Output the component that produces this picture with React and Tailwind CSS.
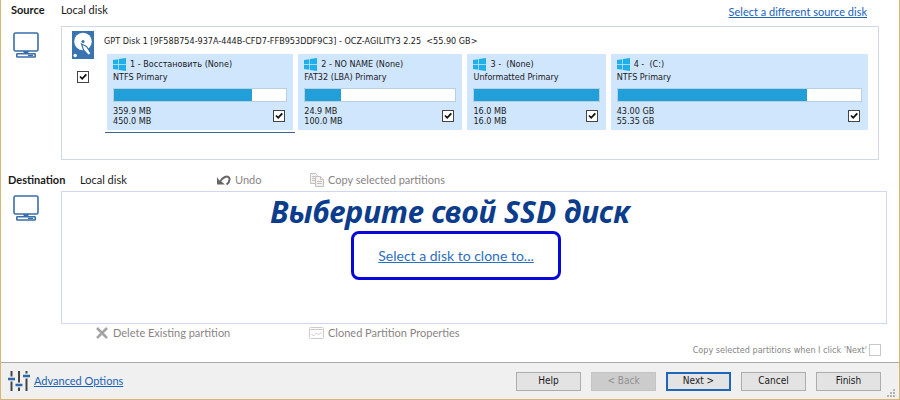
import React, { useState } from 'react';

const partitions = [
  { id: 1, title: '1 - Восстановить (None)', type: 'NTFS Primary', used: '359.9 MB', total: '450.0 MB', percent: 80, selected: true },
  { id: 2, title: '2 - NO NAME (None)', type: 'FAT32 (LBA) Primary', used: '24.9 MB', total: '100.0 MB', percent: 24 },
  { id: 3, title: '3 -  (None)', type: 'Unformatted Primary', used: '16.0 MB', total: '16.0 MB', percent: 100 },
  { id: 4, title: '4 -  (C:)', type: 'NTFS Primary', used: '43.00 GB', total: '55.35 GB', percent: 78 },
];

function ComputerIcon() {
  return (
    <svg width="26" height="26" viewBox="0 0 26 26" fill="none" stroke="#3a6ea8" strokeWidth="1.6">
      <rect x="1" y="1" width="24" height="18" rx="1.5" />
      <path d="M10 19h6l-1 2.500h-4z" fill="#3a6ea8" stroke="none" />
      <rect x="3.8" y="21.8" width="18.4" height="3.2" rx="0.6" />
      <path d="M15 23.400h5" strokeWidth="1.4" />
    </svg>
  );
}

function DiskIcon() {
  return (
    <svg width="22" height="28" viewBox="0 0 22 28">
      <rect width="22" height="28" fill="#3a74b0" />
      <circle cx="11" cy="10.5" r="8.8" fill="#fff" />
      <circle cx="11" cy="10.5" r="1.6" fill="#3a74b0" />
      <path d="M9.500 13l5 2.500 4.500 7-2.500 2-5-5.500z" fill="#fff" stroke="#3a74b0" strokeWidth="1.2" />
      <circle cx="3.2" cy="24.5" r="1.7" fill="#fff" />
    </svg>
  );
}

function WindowsIcon() {
  return (
    <svg width="13" height="13" viewBox="0 0 13 13" fill="#1fb0ea" className="shrink-0">
      <path d="M0 2L5.300 1.200v4.900H0zM6 1L13 0v6.100H6zM0 6.800h5.300v5L0 11zM6 6.800h7V13l-7-1z" />
    </svg>
  );
}

function UndoIcon() {
  return (
    <svg width="15" height="12" viewBox="0 0 15 12" fill="none">
      <path d="M4 8C6 3 12 .8 13.3 4.200 14 6.500 12.500 9 10.500 10.500" stroke="#666" strokeWidth="2" />
      <path d="M1 3v7.500h8L6.500 8.500 3 6z" fill="#666" />
    </svg>
  );
}

function CopyIcon() {
  return (
    <svg width="15" height="14" viewBox="0 0 15 14" fill="#f5f2f2" stroke="#c4bebe">
      <path d="M1.500.5h5l2 2v8h-7z" />
      <path d="M3 3.500h3M3 5.500h3M3 7.500h3" />
      <path d="M6.500 3.500h5l3 3v7h-8z" />
      <path d="M11.500 3.500v3h3M8 8.500h5M8 10.500h5" />
    </svg>
  );
}

function PropertiesIcon() {
  return (
    <svg width="15" height="12" viewBox="0 0 15 12" fill="none" stroke="#d2caca">
      <rect x=".5" y=".5" width="14" height="11" rx="1" />
      <path d="M.5 2.500h14" />
      <path d="M2.500 7l2 2 3-3 2 2 3-3" />
    </svg>
  );
}

function SlidersIcon() {
  return (
    <svg width="22" height="20" viewBox="0 0 22 20" fill="none">
      <path d="M3.500 0v20M11 0v20M18.500 0v20" stroke="#444" strokeWidth="2" />
      <path d="M0 8h7M7.500 14h7M15 5h7" stroke="#efefef" strokeWidth="5" />
      <path d="M0 8h7M7.500 14h7M15 5h7" stroke="#2f67ad" strokeWidth="2.400" />
    </svg>
  );
}

function Checkbox(props) {
  return (
    <span className="relative flex size-3 shrink-0">
      <input
        type="checkbox"
        className="peer size-3 appearance-none border border-[#444] bg-white disabled:border-[#c8c8c8]"
        {...props}
      />
      <svg viewBox="0 0 12 12" className="pointer-events-none absolute inset-0 hidden size-3 peer-checked:block" fill="none" stroke="#111" strokeWidth="1.8">
        <path d="M3 5.500l2.200 2.300L9.300 3.300" />
      </svg>
    </span>
  );
}

function Partition({ item }) {
  const [checked, setChecked] = useState(true);

  return (
    <div className={item.selected ? '-mx-0.5 border-b border-[#3a6294] px-0.5 pb-0.5' : ''}>
      <div className="bg-[#d0e6fd] px-1.5 py-1">
        <div className="flex items-center gap-1">
          <WindowsIcon />
          <span className="whitespace-pre">{item.title}</span>
        </div>
        <div>{item.type}</div>
        <div className="mt-1 h-3.5 border border-[#b8cfe2] bg-white">
          <div className="h-full bg-[#209fd9]" style={{ width: `${item.percent}%` }} />
        </div>
        <div className="mt-1 flex items-center justify-between pr-0.5 leading-[10px]">
          <div>
            <div>{item.used}</div>
            <div>{item.total}</div>
          </div>
          <Checkbox checked={checked} onChange={(e) => setChecked(e.target.checked)} aria-label={`Partition ${item.id}`} />
        </div>
      </div>
    </div>
  );
}

function ToolButton({ icon, children }) {
  return (
    <button type="button" disabled className="flex items-center gap-1 text-[#8a8484]">
      {icon}
      {children}
    </button>
  );
}

function FooterButton({ className = 'border border-[#adadad] bg-[#e3e3e3]', ...props }) {
  return <button type="button" className={`flex h-[19px] w-[65px] items-center justify-center font-['DejaVu_Sans_Condensed','DejaVu_Sans',sans-serif] text-[10px] ${className}`} {...props} />;
}

export default function App() {
  const [diskChecked, setDiskChecked] = useState(true);

  return (
    <div className="border-x border-b border-[#d9b570] bg-white font-[Lato,'Open_Sans',sans-serif] text-[11px] leading-4 text-[#1a1a1a]">
      <main className="pb-1">
        <section>
          <header className="flex h-[26px] items-start pt-0.5 pr-8 pl-2.5">
            <h2 className="w-[50px] font-bold">Source</h2>
            <span>Local disk</span>
            <a href="#source" className="ml-auto pt-0.5 text-[#1a62b8] underline">Select a different source disk</a>
          </header>
          <div className="flex pr-5">
            <div className="w-[60px] shrink-0 pt-1.5 pl-3">
              <ComputerIcon />
            </div>
            <div className="flex h-[134px] min-w-0 flex-1 border border-[#d0d8e6] pr-2.5 font-['DejaVu_Sans_Condensed','DejaVu_Sans',sans-serif] text-[9px] leading-[13px]">
              <div className="flex w-[42px] shrink-0 flex-col items-center gap-3 pt-1">
                <DiskIcon />
                <Checkbox checked={diskChecked} onChange={(e) => setDiskChecked(e.target.checked)} aria-label="GPT Disk 1" />
              </div>
              <div className="min-w-0 flex-1 pt-2">
                <div className="whitespace-pre">GPT Disk 1 [9F58B754-937A-444B-CFD7-FFB953DDF9C3] - OCZ-AGILITY3 2.25  &lt;55.90 GB&gt;</div>
                <div className="mt-1.5 ml-[3px] grid grid-cols-[186fr_164fr_138fr_257fr] gap-[5px]">
                  {partitions.map((item) => (
                    <Partition key={item.id} item={item} />
                  ))}
                </div>
              </div>
            </div>
          </div>
        </section>

        <section>
          <header className="flex h-[31px] items-end pb-[3px] pl-[7px]">
            <h2 className="w-[72px] font-bold">Destination</h2>
            <div className="w-[136px]">Local disk</div>
            <div className="w-[93px]">
              <ToolButton icon={<UndoIcon />}>Undo</ToolButton>
            </div>
            <ToolButton icon={<CopyIcon />}>Copy selected partitions</ToolButton>
          </header>
          <div className="flex pr-3">
            <div className="w-[60px] shrink-0 pt-1 pl-3">
              <ComputerIcon />
            </div>
            <div className="flex h-[133px] flex-1 flex-col items-center border border-[#cfd8ee] pr-9">
              <h1 className="pr-3 font-['Noto_Sans','Open_Sans',sans-serif] text-[30px] leading-[39px] font-bold text-[#0c3c8c] italic">Выберите свой SSD диск</h1>
              <div className="flex h-[49px] w-[210px] items-center justify-center rounded-lg border-3 border-[#0808d8]">
                <a href="#destination" className="text-[14px] text-[#2c6fbe] underline">Select a disk to clone to...</a>
              </div>
            </div>
          </div>
          <div className="flex pt-px pb-px pl-[94px]">
            <div className="w-[214px]">
              <ToolButton
                icon={
                  <svg width="14" height="12" viewBox="0 0 14 12" fill="none" stroke="#a3a3a3" strokeWidth="2.500">
                    <path d="M2 1l10 10M12 1L2 11" />
                  </svg>
                }
              >
                Delete Existing partition
              </ToolButton>
            </div>
            <ToolButton icon={<PropertiesIcon />}>Cloned Partition Properties</ToolButton>
          </div>
          <label className="flex items-center justify-end gap-0.5 pr-[18px] font-['DejaVu_Sans_Condensed','DejaVu_Sans',sans-serif] text-[9px] leading-4 text-[#858585]">
            Copy selected partitions when I click 'Next'
            <Checkbox disabled />
          </label>
        </section>
      </main>

      <footer className="relative flex h-[37px] items-center border-t border-[#a9a9a9] bg-[#f0f0f0] pr-[18px] pl-[7px]">
        <SlidersIcon />
        <a href="#advanced" className="ml-1 text-[#1a62b8] underline">Advanced Options</a>
        <div className="ml-auto flex gap-2.5">
          <FooterButton>Help</FooterButton>
          <FooterButton disabled className="border border-[#c4c4c4] bg-[#cccccc] text-[#919191]">&lt; Back</FooterButton>
          <FooterButton className="border-2 border-[#1f66b8] bg-[#e3e3e3]">Next &gt;</FooterButton>
          <FooterButton>Cancel</FooterButton>
          <FooterButton>Finish</FooterButton>
        </div>
        <svg width="8" height="8" viewBox="0 0 8 8" fill="#b4b4b4" className="absolute right-1 bottom-0.5">
          <path d="M6 0h2v2H6zM3 3h2v2H3zM6 3h2v2H6zM0 6h2v2H0zM3 6h2v2H3zM6 6h2v2H6z" />
        </svg>
      </footer>
    </div>
  );
}
